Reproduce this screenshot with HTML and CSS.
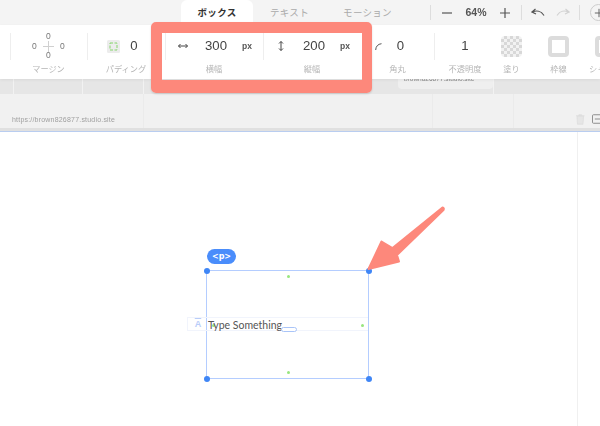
FILE: index.html
```html
<!DOCTYPE html>
<html lang="ja">
<head>
<meta charset="utf-8">
<title>Studio</title>
<link rel="stylesheet" href="styles.css">
</head>
<body>
<div class="app">
  <header class="tabs">
    <div class="tab-list">
      <div class="tab active">ボックス</div>
      <div class="tab tab-text">テキスト</div>
      <div class="tab tab-motion">モーション</div>
    </div>
    <div class="zoom">
      <span class="vr"></span>
      <svg class="z-minus" width="12" height="12" viewBox="0 0 12 12"><path d="M1 6h10" stroke="#555" stroke-width="1.200"/></svg>
      <span class="pct">64%</span>
      <svg class="z-plus" width="12" height="12" viewBox="0 0 12 12"><path d="M1 6h10M6 1v10" stroke="#555" stroke-width="1.200"/></svg>
      <span class="vr z-sep"></span>
      <svg class="z-undo" width="14" height="10" viewBox="0 0 14 10"><path d="M4.500 1L1 4l4 2M1.500 4C5 2.500 10 2.500 13 7.500" fill="none" stroke="#555" stroke-width="1.200"/></svg>
      <svg class="z-redo" width="14" height="10" viewBox="0 0 14 10"><path d="M9.500 1L13 4l-4 2M12.500 4C9 2.500 4 2.500 1 7.500" fill="none" stroke="#d2d2d2" stroke-width="1.200"/></svg>
      <span class="vr z-sep2"></span>
      <span class="add"><svg width="12" height="12" viewBox="0 0 12 12"><path d="M1 6h10M6 1v10" stroke="#666" stroke-width="1.200"/></svg></span>
    </div>
  </header>

  <section class="toolbar">
    <div class="tool tool-margin">
      <div class="tool-body">
        <div class="cross">
          <span class="c-top">0</span><span class="c-left">0</span>
          <svg class="c-mid" width="11" height="11" viewBox="0 0 11 11"><path d="M0 5.500h11M5.500 0v11" stroke="#d0d0d0"/></svg>
          <span class="c-right">0</span><span class="c-bottom">0</span>
        </div>
      </div>
      <div class="label">マージン</div>
    </div>
    <div class="tool tool-padding">
      <div class="tool-body">
        <svg width="13" height="13" viewBox="0 0 13 13"><rect width="13" height="13" rx="1.500" fill="#ececec"/><rect x="3" y="3" width="7" height="7" fill="none" stroke="#86d56c" stroke-width="1" stroke-dasharray="3 1.500"/></svg>
        <span class="num">0</span>
      </div>
      <div class="label">パディング</div>
    </div>
    <div class="tool tool-w">
      <div class="tool-body">
        <svg class="glyph" width="10" height="6" viewBox="0 0 10 6"><path d="M0.500 3h9M2.500 1L0.500 3l2 2M7.500 1l2 2-2 2" fill="none" stroke="#444"/></svg>
        <span class="num dim">300</span>
        <span class="px">px</span>
      </div>
      <div class="label">横幅</div>
    </div>
    <div class="tool tool-h">
      <div class="tool-body">
        <svg class="glyph" width="6" height="10" viewBox="0 0 6 10"><path d="M3 0.500v9M1 2.500l2-2 2 2M1 7.500l2 2 2-2" fill="none" stroke="#444"/></svg>
        <span class="num dim">200</span>
        <span class="px">px</span>
      </div>
      <div class="label">縦幅</div>
    </div>
    <div class="tool tool-radius">
      <div class="tool-body">
        <svg width="7" height="7" viewBox="0 0 7 7"><path d="M0.700 7C0.700 3.500 3 1 6.500 0.700" fill="none" stroke="#555" stroke-width="1"/></svg>
        <span class="num">0</span>
      </div>
      <div class="label">角丸</div>
    </div>
    <div class="tool tool-opacity">
      <div class="tool-body"><span class="num">1</span></div>
      <div class="label">不透明度</div>
    </div>
    <div class="tool tool-swatch">
      <div class="tool-body"><span class="swatch checker"></span></div>
      <div class="label">塗り</div>
    </div>
    <div class="tool tool-swatch">
      <div class="tool-body"><span class="swatch border"></span></div>
      <div class="label">枠線</div>
    </div>
    <div class="tool tool-swatch">
      <div class="tool-body"><span class="swatch border"></span></div>
      <div class="label">シャドウ</div>
    </div>
  </section>

  <div class="strip">
    <div class="strip-card">brown826877.studio.site</div>
  </div>
  <div class="urlbar">
    <span class="url">https://brown826877.studio.site</span>
    <div class="url-icons">
      <svg width="9" height="11" viewBox="0 0 9 11"><path d="M0 1.500h9M3 1.500V.5h3v1M1 2l.6 8.500h5.800L8 2z" fill="#e6e6e6" stroke="#dadada" stroke-width=".7"/></svg>
      <svg width="9" height="10" viewBox="0 0 9 10"><rect x=".5" y=".5" width="9" height="9" rx="1" fill="none" stroke="#888"/><path d="M3 5h6" stroke="#888"/></svg>
    </div>
  </div>
  <div class="band"></div>

  <main class="canvas">
    <div class="guide"></div>
    <div class="selection">
      <span class="tag">&lt;p&gt;</span>
      <span class="handle tl"></span><span class="handle tr"></span><span class="handle bl"></span><span class="handle br"></span>
      <span class="dot d-top"></span><span class="dot d-bottom"></span><span class="dot d-right"></span><span class="dot d-left"></span>
      <div class="textrow">
        <span class="text-icon">A</span>
        <span class="text">Type Something</span>
        <span class="pill"></span>
      </div>
    </div>
  </main>

  <div class="highlight"></div>
  <svg class="arrow" width="90" height="70" viewBox="0 0 90 70"><path d="M1.500 64 L14.500 36.500 L25.500 43 L75.500 2.500 Q77.500 3 76.500 5 L30 50 L32 56.500 Z" fill="#fd887b" stroke="#fd887b" stroke-width="2" stroke-linejoin="round"/></svg>
</div>
</body>
</html>
```
FILE: styles.css
```css
* { box-sizing: border-box; }
html, body { margin: 0; padding: 0; }
body { width: 600px; height: 426px; overflow: hidden; background: #fff; font-family: "Noto Sans CJK JP", "Liberation Sans", sans-serif; }
.app { position: relative; width: 600px; height: 426px; overflow: hidden; display: flex; flex-direction: column; filter: blur(.35px); }

.tabs { height: 25px; background: #f4f4f4; display: flex; position: relative; flex: none; }
.tab-list { display: flex; padding-left: 181px; }
.tab { height: 25px; font-size: 9.500px; line-height: 24px; color: #aaa; text-align: center; letter-spacing: .3px; }
.tab.active { width: 72px; background: #fff; color: #333; font-weight: 700; border-radius: 6px 6px 0 0; }
.tab-text { width: 73px; }
.tab-motion { width: 83px; }
.zoom { position: absolute; left: 430px; top: 0; height: 25px; width: 170px; display: flex; align-items: center; }
.zoom > * { flex: none; }
.vr { width: 1px; height: 15px; background: #ddd; }
.z-minus { margin-left: 10px; }
.pct { font: 700 10.500px/1 "Liberation Sans", sans-serif; color: #555; margin-left: 12px; width: 22px; text-align: center; }
.z-plus { margin-left: 12px; }
.z-sep { margin-left: 10px; }
.z-undo { margin-left: 9px; }
.z-redo { margin-left: 11px; }
.z-sep2 { margin-left: 9px; }
.add { width: 17px; height: 17px; border: 1px solid #ccc; border-radius: 50%; display: flex; align-items: center; justify-content: center; margin-left: 10px; }
.add svg { width: 10px; height: 10px; }

.toolbar { height: 54px; background: #fff; display: flex; flex: none; position: relative; z-index: 1; box-shadow: 0 1px 3px rgba(0,0,0,.06); }
.tool { display: flex; flex-direction: column; align-items: center; flex: none; position: relative; padding-top: 6px; }
.tool-body { height: 30px; display: flex; align-items: center; justify-content: center; }
.label { font-size: 8.200px; line-height: 12px; color: #b5b5b5; margin-top: 1px; white-space: nowrap; }
.tool::before { content: ""; position: absolute; left: 0; top: 8px; height: 27px; width: 1px; background: #eee; }
.tool-margin { width: 77px; margin-left: 10px; }
.tool-padding { width: 78px; }
.tool-padding .tool-body { gap: 10px; padding-right: 7px; }
.tool-w, .tool-h { width: 98px; }
.tool-w .tool-body { width: 100%; justify-content: flex-start; padding-left: 13px; }
.tool-w .num { margin-left: 17px; }
.tool-h .tool-body { width: 100%; justify-content: flex-start; padding-left: 15px; }
.tool-h .num { margin-left: 19px; }
.tool-radius { width: 73px; }
.tool-radius::before { display: none; }
.tool-radius .tool-body { gap: 15px; padding-right: 16px; }
.tool-opacity { width: 54px; padding-left: 8px; }
.tool-swatch { width: 47px; }
.tool-swatch::before { display: none; }
.num { font: 400 13.200px/1 "Liberation Sans", sans-serif; color: #444; }
.px { font: 700 8.500px/1 "Liberation Sans", sans-serif; color: #555; margin-left: 15px; }
.glyph { flex: none; }
.cross { position: relative; width: 37px; height: 30px; font: 8.500px/1 "Liberation Sans", sans-serif; color: #777; }
.cross span { position: absolute; }
.c-top { left: 16px; top: 1px; }
.c-bottom { left: 16px; top: 20px; }
.c-left { left: 2px; top: 10.500px; }
.c-right { left: 30px; top: 10.500px; }
.c-mid { position: absolute; left: 13px; top: 10px; }
.swatch { display: block; width: 21px; height: 21px; border-radius: 4px; }
.swatch.checker { background-color: #f2f2f2; background-image: linear-gradient(45deg,#d8d8d8 25%,transparent 25%,transparent 75%,#d8d8d8 75%), linear-gradient(45deg,#d8d8d8 25%,transparent 25%,transparent 75%,#d8d8d8 75%); background-size: 6px 6px; background-position: 0 0, 3px 3px; }
.swatch.border { background: #fff; border: 4px solid #dcdcdc; }

.strip { height: 15px; flex: none; padding-left: 398px; background-color: #e6e6e6; background-image: linear-gradient(#f2f2f2,#f2f2f2), linear-gradient(#f2f2f2,#f2f2f2), linear-gradient(#f2f2f2,#f2f2f2), linear-gradient(#f2f2f2,#f2f2f2); background-size: 1px 100%; background-repeat: no-repeat; background-position: 13px 0, 82px 0, 143px 0, 493px 0; }
.strip-card { width: 95px; height: 13px; margin-top: -3px; background: #efefef; border-radius: 0 0 4px 4px; font: 6.500px/6px "Liberation Sans", sans-serif; color: #888; padding-left: 6px; overflow: hidden; white-space: nowrap; will-change: transform; }
.urlbar { height: 34px; flex: none; background-color: #f1f1f1; background-image: linear-gradient(#ebebeb,#ebebeb), linear-gradient(#ebebeb,#ebebeb), linear-gradient(#ebebeb,#ebebeb); background-size: 1px 100%; background-repeat: no-repeat; background-position: 143px 0, 432px 0, 513px 0; display: flex; align-items: center; justify-content: space-between; padding: 16px 0 0 12px; }
.url { font: 7px/1 "Liberation Sans", sans-serif; color: #a0a0a0; letter-spacing: .2px; will-change: transform; }
.url-icons { display: flex; gap: 7px; width: 24px; overflow: hidden; }
.band { height: 3px; flex: none; background: #e0e0e0; }

.canvas { flex: 1; position: relative; background: #fff; border-top: 1px solid #b9cdf0; }
.guide { position: absolute; left: 577px; top: 0; bottom: 0; width: 1px; background: #f0f0f0; }
.selection { position: absolute; left: 206px; top: 138px; width: 163px; height: 109px; border: 1px solid #b4cdff; }
.tag { position: absolute; left: 0; top: -22px; width: 29px; height: 15px; border-radius: 8px; background: #4a8dfb; color: #fff; font: 700 8px/15px "DejaVu Sans", sans-serif; text-align: center; }
.handle { position: absolute; width: 6px; height: 6px; border-radius: 50%; background: #3f86f6; }
.tl { left: -3.500px; top: -3.500px; }
.tr { right: -3.500px; top: -3.500px; }
.bl { left: -3.500px; bottom: -3.500px; }
.br { right: -3.500px; bottom: -3.500px; }
.dot { position: absolute; width: 3px; height: 3px; border-radius: 50%; background: #98e67e; }
.d-top { left: 80px; top: 4px; }
.d-bottom { left: 80px; bottom: 4px; }
.d-right { right: 4px; top: 53px; }
.d-left { left: 5px; top: 53px; }
.textrow { position: absolute; left: -20px; right: 0; top: 46px; height: 14px; display: flex; align-items: center; border: 1px solid #f1f4fc; border-right: 0; }
.text-icon { width: 20px; font: 700 9px/9px "Liberation Sans", sans-serif; color: #b9cdf9; text-align: center; }
.text-icon::first-line { text-decoration: overline; }
.text { font: 400 10.500px/13px Lato, sans-serif; color: #555; white-space: nowrap; padding-top: 2px; }
.pill { position: absolute; left: 93px; top: 9px; width: 16px; height: 5px; border: 1px solid #a9c4f8; border-radius: 3px; background: #fff; }

.highlight { position: absolute; left: 151px; top: 22px; width: 221px; height: 71px; border-style: solid; border-color: #fd887b; border-width: 11px 10px 13px 11px; border-radius: 5px; z-index: 2; box-shadow: 0 1px 2px rgba(0,0,0,.15); }
.arrow { position: absolute; left: 367px; top: 205px; z-index: 2; }
```
